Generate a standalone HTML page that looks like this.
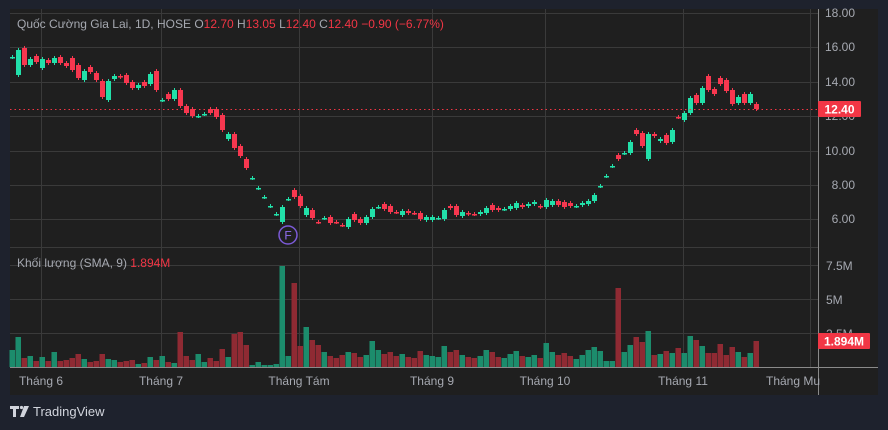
<!DOCTYPE html>
<html><head><meta charset="utf-8">
<style>
html,body{margin:0;padding:0;background:#1e222d;width:888px;height:430px;overflow:hidden;font-family:"Liberation Sans","DejaVu Sans",sans-serif}
svg{position:absolute;left:0;top:0}
</style></head><body>
<svg id="s" width="888" height="430" xmlns="http://www.w3.org/2000/svg">
<rect x="0" y="0" width="888" height="430" fill="#1e222d"/>
<rect x="10" y="9" width="868" height="386" fill="#1f1f1f"/>
<g id="grid" stroke="#3a3a3a" stroke-width="1"></g>
<g id="vol"></g>
<g id="cdl"></g>
<line x1="10" y1="109.5" x2="818" y2="109.5" stroke="#f23645" stroke-width="1" stroke-dasharray="1.5,3"/>
<line x1="818.5" y1="9" x2="818.5" y2="395" stroke="#8a8a8a"/>
<line x1="10" y1="367.5" x2="878" y2="367.5" stroke="#8a8a8a"/>
<g font-size="12" fill="#a6a9b1" id="ax"></g>
<text x="17" y="28" font-size="12" fill="#a6a9b1">Quốc Cường Gia Lai, 1D, HOSE <tspan fill="#a6a9b1">O</tspan><tspan fill="#f23645">12.70</tspan> <tspan>H</tspan><tspan fill="#f23645">13.05</tspan> <tspan>L</tspan><tspan fill="#f23645">12.40</tspan> <tspan>C</tspan><tspan fill="#f23645">12.40</tspan> <tspan fill="#f23645">−0.90 (−6.77%)</tspan></text>
<text x="17" y="267" font-size="12" fill="#a6a9b1">Khối lượng (SMA, 9) <tspan fill="#f23645">1.894M</tspan></text>
<rect x="818" y="101" width="43" height="16" rx="1" fill="#f23645"/>
<text x="839.5" y="113.5" font-size="12" font-weight="bold" fill="#fff" text-anchor="middle">12.40</text>
<rect x="818" y="333" width="52" height="16" rx="1" fill="#f23645"/>
<text x="844" y="345.5" font-size="12" font-weight="bold" fill="#fff" text-anchor="middle">1.894M</text>
<circle cx="288" cy="235" r="9" fill="#1f1f1f" stroke="#7b5ad6" stroke-width="1.5"/>
<text x="288" y="239.5" font-size="12" fill="#8f6ef0" text-anchor="middle">F</text>
<g fill="#d1d4dc">
<path d="M10 406h9v3h-3v8h-3v-8h-3z"/>
<circle cx="21.5" cy="407.5" r="1.6"/>
<path d="M24 406h5l-5 11h-4z"/>
</g>
<text x="33" y="416" font-size="13" fill="#d1d4dc">TradingView</text>
</svg>
<script>
var NS="http://www.w3.org/2000/svg";
function el(p,t,a,txt){var e=document.createElementNS(NS,t);for(var k in a)e.setAttribute(k,a[k]);if(txt)e.textContent=txt;document.getElementById(p).appendChild(e);return e;}
// grid
[13,47,82,116,151,185,219,247,265,299,333].forEach(function(y){el("grid","line",{x1:10,x2:818,y1:y+.5,y2:y+.5});});
[41,161,299,432,545,683,810].forEach(function(x){el("grid","line",{x1:x+.5,x2:x+.5,y1:9,y2:367});});
// axis labels
[["18.00",17],["16.00",51],["14.00",86],["12.00",120],["10.00",155],["8.00",189],["6.00",223]].forEach(function(a){el("ax","text",{x:855,y:a[1],"text-anchor":"end"},a[0]);});
[["7.5M",270],["5M",304],["2.5M",338]].forEach(function(a){el("ax","text",{x:826,y:a[1]},a[0]);});
[["Tháng 6",41],["Tháng 7",161],["Tháng Tám",299],["Tháng 9",432],["Tháng 10",545],["Tháng 11",683]].forEach(function(a){el("ax","text",{x:a[1],y:385,"text-anchor":"middle"},a[0]);});
el("ax","text",{x:766,y:385},"Tháng Mu");
// candles [top,bottom,color]
var C=[[57,57,'g'],[50,75,'g'],[48,65,'r'],[59,65,'g'],[56,62,'r'],[59,68,'g'],[60,63,'r'],[58,63,'g'],[57,63,'r'],[63,66,'r'],[58,70,'r'],[65,78,'r'],[71,80,'g'],[67,72,'r'],[73,80,'r'],[81,97,'r'],[81,100,'g'],[76,79,'g'],[76,77,'r'],[75,83,'r'],[82,88,'r'],[85,88,'g'],[82,86,'r'],[74,84,'g'],[71,90,'r'],
[100,100,'g'],[94,99,'r'],[90,99,'g'],[90,106,'r'],[106,113,'r'],[109,116,'r'],[116,116,'g'],[114,114,'g'],[109,113,'r'],[109,117,'r'],[115,130,'r'],[134,139,'g'],[134,148,'r'],[146,156,'r'],[159,168,'r'],[178,178,'g'],[188,188,'g'],[197,197,'g'],[206,206,'g'],[214,214,'g'],[207,222,'g'],[199,199,'g'],[190,197,'r'],[196,206,'r'],[208,215,'g'],[210,218,'r'],[222,222,'r'],[218,218,'g'],[217,223,'r'],[222,222,'r'],[225,225,'r'],[219,227,'g'],[214,220,'r'],[219,223,'r'],[217,223,'g'],[209,217,'g'],[207,207,'g'],[204,209,'r'],[206,212,'r'],[212,212,'r'],[211,215,'g'],[211,213,'r'],[213,213,'r'],[213,219,'r'],[217,220,'g'],[217,220,'g'],[218,218,'g'],[210,219,'g'],[206,208,'r'],[206,215,'r'],[212,216,'g'],[213,214,'r'],[214,214,'r'],[212,214,'g'],[208,213,'g'],[205,210,'r'],[208,210,'r'],[209,209,'g'],[206,209,'g'],[203,208,'g'],[205,207,'r'],[204,206,'g'],[202,204,'g'],[206,207,'r'],[200,207,'g'],[201,205,'g'],[201,205,'r'],[202,207,'r'],[203,206,'r'],[206,206,'g'],[203,205,'g'],[201,204,'g'],[195,201,'g'],[186,186,'g'],[176,176,'g'],[166,166,'g'],[155,159,'r'],[153,153,'g'],[142,153,'g'],[130,134,'r'],[133,146,'r'],[134,159,'g'],[134,136,'r'],[139,141,'g'],[135,143,'r'],[130,142,'g'],[117,117,'r'],[113,120,'g'],[98,113,'g'],[95,103,'r'],[88,103,'g'],[76,90,'r'],[89,94,'r'],[78,84,'r'],[80,91,'r'],[90,104,'r'],[97,103,'g'],[94,103,'r'],[94,103,'g'],[104,109,'r']];
// adjust so candle index 25.. aligns at x=161 (the list above has 25 pre items), x=12+6i
C.forEach(function(c,i){
  var x=12+6*(i), col=c[2]=='g'?'#22e0a9':'#f7374f';
  var h=Math.max(1.5,c[1]-c[0]);
  el("cdl","line",{x1:x+.5,x2:x+.5,y1:c[0]-2,y2:c[1]+2,stroke:col,"stroke-width":1});
  el("cdl","rect",{x:x-2,y:c[0],width:5,height:h,fill:col});
});
// volume tops
var V=[[350,'g'],[337,'g'],[358,'r'],[356,'g'],[361,'r'],[357,'g'],[361,'r'],[352,'g'],[361,'r'],[360,'r'],[358,'r'],[354,'r'],[359,'g'],[362,'r'],[361,'r'],[354,'r'],[359,'g'],[360,'g'],[362,'r'],[361,'r'],[360,'r'],[364,'g'],[363,'r'],[357,'g'],[360,'r'],[356,'g'],[362,'r'],[363,'g'],[332,'r'],[356,'r'],[360,'r'],[354,'g'],[362,'g'],[358,'r'],[361,'r'],[349,'r'],[357,'g'],[334,'r'],[332,'r'],[345,'r'],[365,'g'],[362,'g'],[365,'g'],[365,'g'],[364,'g'],[266,'g'],[356,'g'],[283,'r'],[346,'r'],
[327,'g'],[340,'r'],[345,'r'],[352,'g'],[356,'r'],[358,'r'],[355,'r'],[352,'g'],[353,'r'],[357,'r'],[355,'g'],[341,'g'],[350,'g'],[354,'r'],[352,'r'],[356,'r'],[354,'g'],[357,'r'],[358,'r'],[351,'r'],[355,'g'],[356,'g'],[357,'g'],[346,'g'],[352,'r'],[350,'r'],[355,'g'],[357,'r'],[358,'r'],[356,'g'],[350,'g'],[352,'r'],[357,'r'],[358,'g'],[354,'g'],[351,'g'],[356,'r'],[357,'g'],[355,'g'],[358,'r'],[343,'g'],[352,'g'],[355,'r'],[353,'r'],[356,'r'],[359,'g'],[355,'g'],[350,'g'],[347,'g'],[351,'g'],[361,'g'],[361,'g'],[288,'r'],[352,'g'],[345,'g'],[337,'r'],[342,'r'],[331,'g'],[355,'r'],[354,'g'],[351,'r'],[353,'g'],[348,'r'],[353,'g'],[336,'g'],[340,'r'],[346,'g'],[353,'r'],[353,'r'],[344,'r'],[355,'r'],[347,'r'],[352,'g'],[357,'r'],[353,'g'],[341,'r']];
V.forEach(function(v,i){
  var x=12+6*i; if(i>=C.length) return;
  el("vol","rect",{x:x-2.5,y:v[0],width:5.5,height:367-v[0],fill:v[1]=='g'?'#1c8c6c':'#8f2a33'});
});
</script>
</body></html>
